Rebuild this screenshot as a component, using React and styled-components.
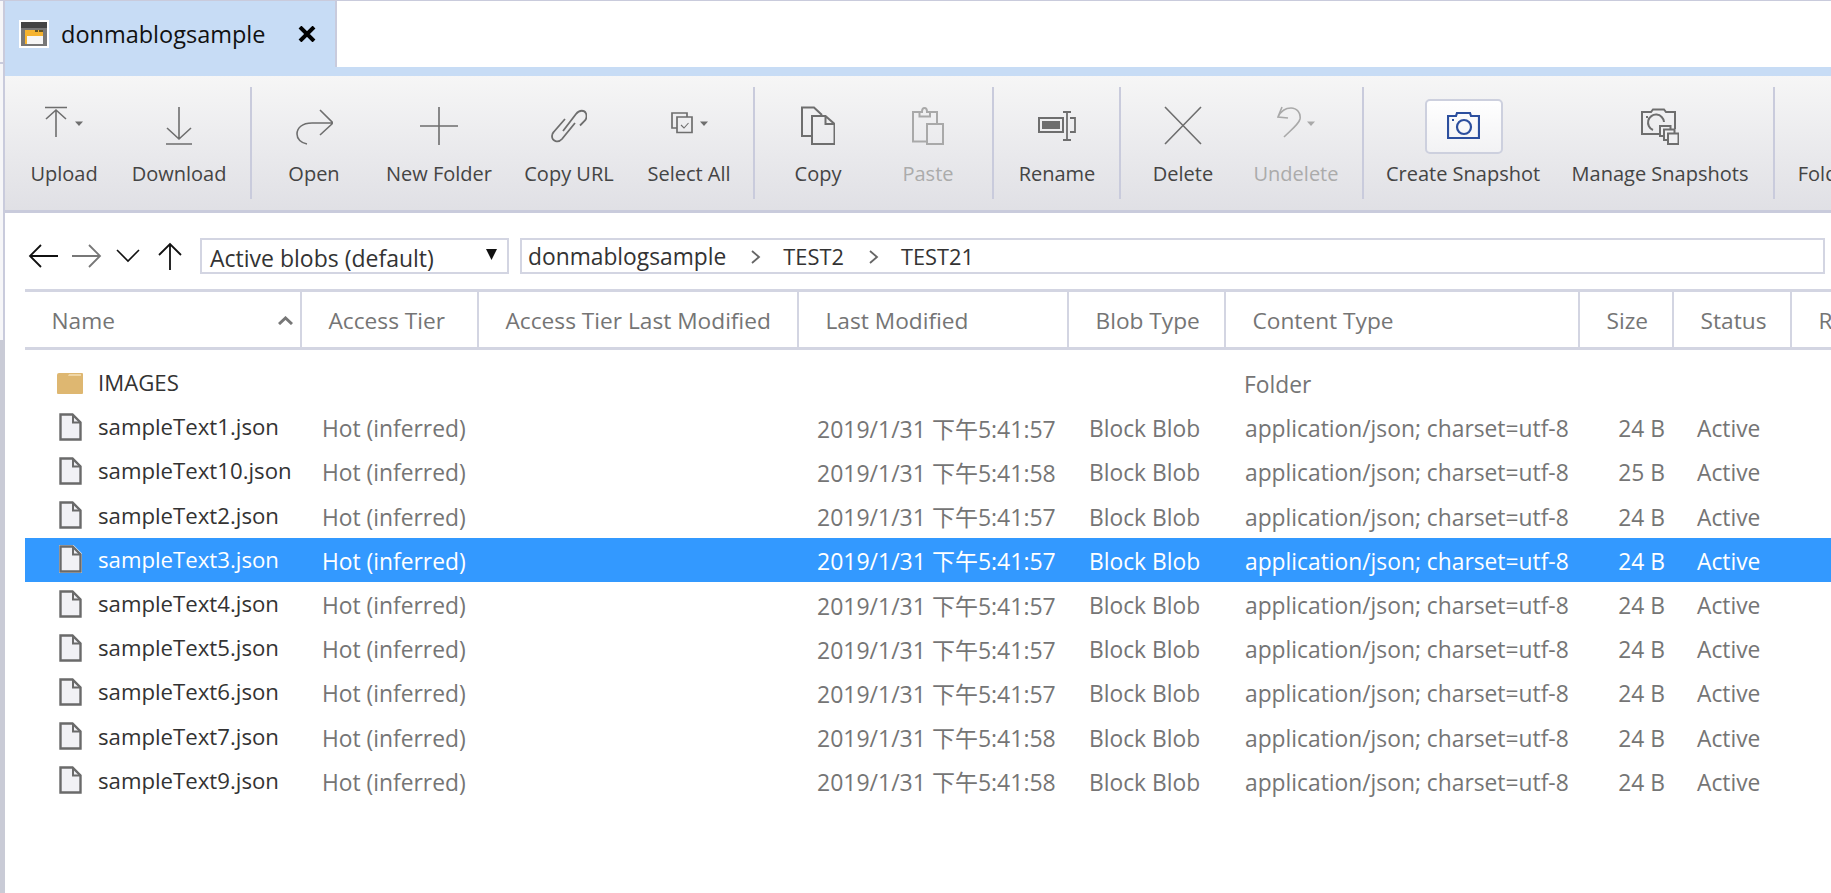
import React from 'react'
import styled, { createGlobalStyle } from 'styled-components'

const GlobalStyle = createGlobalStyle`
  html, body { margin: 0; padding: 0; background: #fff; }
  * { box-sizing: border-box; }
`

const COLUMNS = '277px 177px 320px 270px 157px 354px 94px 118px 1fr'

const files = [
  ['sampleText1.json', '2019/1/31 下午5:41:57', '24 B'],
  ['sampleText10.json', '2019/1/31 下午5:41:58', '25 B'],
  ['sampleText2.json', '2019/1/31 下午5:41:57', '24 B'],
  ['sampleText3.json', '2019/1/31 下午5:41:57', '24 B', true],
  ['sampleText4.json', '2019/1/31 下午5:41:57', '24 B'],
  ['sampleText5.json', '2019/1/31 下午5:41:57', '24 B'],
  ['sampleText6.json', '2019/1/31 下午5:41:57', '24 B'],
  ['sampleText7.json', '2019/1/31 下午5:41:58', '24 B'],
  ['sampleText9.json', '2019/1/31 下午5:41:58', '24 B'],
]

const Caret = () => <path d="M30 16.500h8l-4 4.500z" fill="currentColor" stroke="none" />

const Svg = ({ w, children }) => (
  <svg width={w} height="40" viewBox={`0 0 ${w} 40`} fill="none" stroke="currentColor" strokeWidth="1.6">
    {children}
  </svg>
)

const icons = {
  upload: <Svg w={38}><path d="M0 2.500h22M11 5v27M1 14l10-9 10 9" /><Caret /></Svg>,
  download: <Svg w={26}><path d="M13 2v32M1 23l12 11 12-11M0 39h26" /></Svg>,
  open: <Svg w={37}><path d="M24 5l13 13-13 12M36 18H16C6 18 1 23 1 29c0 5 4 9 10 10" /></Svg>,
  plus: <Svg w={38}><path d="M0 21h38M19 2v38" /></Svg>,
  link: (
    <Svg w={36}>
      <path d="M24 18L11 34c-4 4.500-10 2-10-3 0-2 .7-3 1.700-4L14 14" strokeWidth="1.8" />
      <path d="M12 26L25 9c3.500-4.500 8.500-4 10-.5 1.200 3 .5 5-1 7l-5 5" strokeWidth="1.8" />
    </Svg>
  ),
  selectAll: (
    <Svg w={38}>
      <path d="M7 23H2V8h15v4" strokeWidth="1.7" />
      <path d="M7 12h15v15.500H7z" strokeWidth="1.7" />
      <path d="M11 20l3 3 4.500-5" strokeWidth="1.1" />
      <Caret />
    </Svg>
  ),
  copy: (
    <Svg w={34}>
      <g strokeWidth="2">
        <path d="M10.700 31H1V2.500h12L21 10" />
        <path d="M11 11v28h22.500V19l-9-8zM24.500 11v8h9" />
      </g>
    </Svg>
  ),
  paste: (
    <Svg w={32}>
      <g strokeWidth="2">
        <path d="M15 36.500H1V7h6.500M18 7h7v12" />
        <path d="M7.500 7v4.500H18V7h-3c0-3-1.500-4-2.500-4-1.500 0-2.500 1-2.500 4z" />
        <path d="M15 19h16v20H15z" />
      </g>
    </Svg>
  ),
  rename: (
    <Svg w={38}>
      <path d="M1 13h24v14H1z" strokeWidth="2" />
      <path d="M4 16h18v8H4z" fill="currentColor" stroke="none" />
      <path d="M25 7h8M29 8v26M25 35h8M32 13h5v14h-5" strokeWidth="1.8" />
    </Svg>
  ),
  del: <Svg w={38}><path d="M1 2l36 37M37 2L1 39" /></Svg>,
  undelete: (
    <Svg w={38}>
      <path d="M5 2L1 12l10 1M1 12c3-6 8-9 13-9 6 0 10 5 9 11-1 5-9 11-16 18" />
      <Caret />
    </Svg>
  ),
  camera: (
    <Svg w={33}>
      <g strokeWidth="2.2">
        <path d="M1 11h8l1-3h13l1 3h8v22H1z" />
        <circle cx="17" cy="22" r="7" />
      </g>
      <path d="M5 14h2v2H5z" fill="currentColor" stroke="none" />
    </Svg>
  ),
  manage: (
    <Svg w={38}>
      <g strokeWidth="2">
        <path d="M18 29H1V7h9l2-2.500h11L25 7h9v17" />
        <path d="M12 25a8 8 0 1 1 11-8" />
        <path d="M19 21h10.500v10H19z" fill="#efeff1" />
        <path d="M23 24.500h10.500V35H23z" fill="#efeff1" />
        <path d="M27 28.500h10.500V39H27z" fill="#efeff1" />
      </g>
      <path d="M5 11h2v2H5z" fill="currentColor" stroke="none" />
    </Svg>
  ),
}

const tools = [
  { label: 'Upload', icon: 'upload', w: 118 },
  { label: 'Download', icon: 'download', w: 112 },
  { sep: 15 },
  { label: 'Open', icon: 'open', w: 122 },
  { label: 'New Folder', icon: 'plus', w: 128 },
  { label: 'Copy URL', icon: 'link', w: 132 },
  { label: 'Select All', icon: 'selectAll', w: 108 },
  { sep: 10 },
  { label: 'Copy', icon: 'copy', w: 124 },
  { label: 'Paste', icon: 'paste', w: 96, off: true },
  { sep: 16 },
  { label: 'Rename', icon: 'rename', w: 124 },
  { sep: 0 },
  { label: 'Delete', icon: 'del', w: 122 },
  { label: 'Undelete', icon: 'undelete', w: 104, off: true },
  { sep: 14 },
  { label: 'Create Snapshot', icon: 'camera', w: 196, active: true },
  { label: 'Manage Snapshots', icon: 'manage', w: 198 },
  { sep: 14 },
  { label: 'Folder Statistics', w: 190 },
]

function FileIcon({ selected }) {
  return (
    <svg width="25" height="30" viewBox="0 0 25 30">
      {selected && <path d="M1 1h14.500L24 9.500V29H1z" fill="#f4f8fd" />}
      <path d="M2.500 2.500h12l8 8v17h-20z" fill="#f1f1f5" stroke="#6a6a6a" strokeWidth="2.400" />
      <path d="M15 2.500v8h8" fill="none" stroke="#6a6a6a" strokeWidth="2" />
    </svg>
  )
}

function FolderIcon() {
  return (
    <svg width="28" height="24" viewBox="0 0 28 24">
      <path d="M1 4a2 2 0 0 1 2-2h23a1 1 0 0 1 1 1v19a1 1 0 0 1-1 1H2a1 1 0 0 1-1-1z" fill="#deb771" />
      <path d="M13 3h12v2H12z" fill="#efd6a6" />
    </svg>
  )
}

function Chevron() {
  return (
    <CrumbChevron width="10" height="14" viewBox="0 0 10 14" fill="none" stroke="#666" strokeWidth="1.8">
      <path d="M1 1l7 6-7 6" />
    </CrumbChevron>
  )
}

export default function App() {
  return (
    <Page>
      <GlobalStyle />
      <LeftStrip>
        <StripTop />
        <StripMid />
        <StripBottom />
      </LeftStrip>
      <Main>
        <TabBar>
          <Tab>
            <svg viewBox="0 0 30 28" width="30" height="28">
              <rect width="30" height="28" fill="#fff" />
              <rect x="2" y="2" width="26" height="24" fill="#777" />
              <rect x="2" y="2" width="26" height="6" fill="#444" />
              <rect x="6" y="10" width="18" height="14" fill="#f5b32f" />
              <rect x="8" y="16" width="16" height="8" fill="#f6f6f6" />
              <path d="M16 10h3v2h-3zM20 10h4v2h-4z" fill="#665522" />
            </svg>
            <TabTitle>donmablogsample</TabTitle>
            <svg width="18" height="16" viewBox="0 0 18 16">
              <path d="M2 1l14 14M16 1L2 15" stroke="#000" strokeWidth="4" />
            </svg>
          </Tab>
        </TabBar>
        <BlueStrip />
        <Toolbar>
          {tools.map((t, i) =>
            t.sep !== undefined ? (
              <ToolSep key={i} $gap={t.sep} />
            ) : (
              <ToolButton key={i} $w={t.w}>
                {t.active && <ActiveBox />}
                <IconSlot $off={t.off} $active={t.active}>{t.icon && icons[t.icon]}</IconSlot>
                <ToolLabel $off={t.off}>{t.label}</ToolLabel>
              </ToolButton>
            )
          )}
        </Toolbar>
        <NavRow>
          <NavIcons>
            <svg width="30" height="24" viewBox="0 0 30 24" fill="none" stroke="#111" strokeWidth="1.8">
              <path d="M30 12H2M13 1L2 12l11 11" />
            </svg>
            <svg width="30" height="24" viewBox="0 0 30 24" fill="none" stroke="#777" strokeWidth="1.8">
              <path d="M0 12h28M17 1l11 11-11 11" />
            </svg>
            <svg width="24" height="14" viewBox="0 0 24 14" fill="none" stroke="#111" strokeWidth="1.6">
              <path d="M1 1l11 11L23 1" />
            </svg>
            <svg width="24" height="28" viewBox="0 0 24 28" fill="none" stroke="#111" strokeWidth="1.8">
              <path d="M12 28V2M1 13L12 2l11 11" />
            </svg>
          </NavIcons>
          <ViewSelect>
            <span>Active blobs (default)</span>
            <svg width="11" height="11" viewBox="0 0 11 11"><path d="M0 0h11L5.500 11z" fill="#111" /></svg>
          </ViewSelect>
          <Breadcrumb>
            <span>donmablogsample</span>
            <Chevron />
            <CrumbFolder>TEST2</CrumbFolder>
            <Chevron />
            <CrumbFolder>TEST21</CrumbFolder>
          </Breadcrumb>
        </NavRow>
        <Header>
          <HeaderCell>
            Name
            <svg width="15" height="9" viewBox="0 0 15 9" fill="none" stroke="#777" strokeWidth="3">
              <path d="M1 8l6.500-6L14 8" />
            </svg>
          </HeaderCell>
          <HeaderCell>Access Tier</HeaderCell>
          <HeaderCell>Access Tier Last Modified</HeaderCell>
          <HeaderCell>Last Modified</HeaderCell>
          <HeaderCell>Blob Type</HeaderCell>
          <HeaderCell>Content Type</HeaderCell>
          <HeaderCell>Size</HeaderCell>
          <HeaderCell>Status</HeaderCell>
          <HeaderCell>Remaining Days</HeaderCell>
        </Header>
        <Rows>
          <Row>
            <NameCell>
              <IconBox><FolderIcon /></IconBox>
              <FileName>IMAGES</FileName>
            </NameCell>
            <Cell />
            <Cell />
            <Cell />
            <Cell />
            <Cell $pad={18}>Folder</Cell>
          </Row>
          {files.map(([name, date, size, selected]) => (
            <Row key={name} $selected={selected}>
              <NameCell>
                <IconBox><FileIcon selected={selected} /></IconBox>
                <FileName $selected={selected}>{name}</FileName>
              </NameCell>
              <Cell>Hot (inferred)</Cell>
              <Cell />
              <DateCell $pad={18}>{date}</DateCell>
              <Cell $pad={20}>Block Blob</Cell>
              <Cell $pad={19}>application/json; charset=utf-8</Cell>
              <SizeCell>{size}</SizeCell>
              <Cell $pad={23}>Active</Cell>
            </Row>
          ))}
        </Rows>
      </Main>
    </Page>
  )
}

// --------------------------------
// STYLES
// --------------------------------

const Page = styled.div`
  display: flex;
  width: 100%;
  height: 100vh;
  overflow: hidden;
  background: #fff;
  font-family: "Open Sans", "Noto Sans CJK TC", sans-serif;
`

const LeftStrip = styled.div`
  width: 5px;
  flex-shrink: 0;
  display: flex;
  flex-direction: column;
`

const StripTop = styled.div`
  height: 64px;
  background: #f6f6f8;
  border-right: 2px solid #c9cbdc;
  border-top: 1px solid #c9cbdc;
  border-bottom: 2px solid #c9cbdc;
`

const StripMid = styled.div`
  height: 276px;
  background: #f6f6f8;
  border-right: 2px solid #c9cbdc;
`

const StripBottom = styled.div`
  flex: 1;
  background: #c9cbd6;
`

const Main = styled.div`
  flex: 1;
  min-width: 0;
`

const TabBar = styled.div`
  height: 67px;
  border-top: 1px solid #c9cbdc;
  background: #fff;
`

const Tab = styled.div`
  width: 332px;
  height: 66px;
  display: flex;
  align-items: center;
  padding: 0 19px 0 14px;
  background: #c7dcf5;
  border-right: 2px solid #c9cbdc;
`

const TabTitle = styled.span`
  flex: 1;
  margin-left: 12px;
  font-size: 23.5px;
  color: #111;
`

const BlueStrip = styled.div`
  height: 9px;
  background: #c7dcf5;
`

const Toolbar = styled.div`
  height: 137px;
  display: flex;
  align-items: stretch;
  padding: 11px 0;
  background: linear-gradient(#f6f6f6, #e0e0e5);
  border-bottom: 3px solid #c9cbdc;
`

const ToolSep = styled.div`
  width: 2px;
  flex-shrink: 0;
  margin: 0 1px 0 ${(p) => p.$gap}px;
  background: #c9cbdc;
`

const ToolButton = styled.div`
  position: relative;
  width: ${(p) => p.$w}px;
  flex-shrink: 0;
  display: flex;
  flex-direction: column;
  align-items: center;
`

const ActiveBox = styled.div`
  position: absolute;
  top: 12px;
  left: 60px;
  width: 78px;
  height: 55px;
  border: 2px solid #cdd0de;
  border-radius: 5px;
  background: linear-gradient(#fff, #f2f2f4);
`

const IconSlot = styled.div`
  position: relative;
  height: 40px;
  margin-top: 18px;
  display: flex;
  color: ${(p) => (p.$active ? '#2c4f9e' : p.$off ? '#a9a9a9' : '#6e6e6e')};
`

const ToolLabel = styled.div`
  margin-top: 15px;
  font-size: 20px;
  line-height: 28px;
  white-space: nowrap;
  color: ${(p) => (p.$off ? '#ababab' : '#444')};
`

const NavRow = styled.div`
  display: flex;
  align-items: stretch;
  height: 36px;
  margin: 25px 6px 15px 0;
`

const NavIcons = styled.div`
  display: flex;
  align-items: center;
  gap: 14px;
  width: 195px;
  padding-left: 23px;

  svg:last-child { margin-left: 4px; }
`

const ViewSelect = styled.div`
  width: 309px;
  display: flex;
  align-items: center;
  justify-content: space-between;
  padding: 3px 10px 0 8px;
  border: 2px solid #d3d5e2;
  font-size: 23px;
  color: #333;

  svg { margin-top: -6px; }
`

const Breadcrumb = styled.div`
  flex: 1;
  margin-left: 11px;
  display: flex;
  align-items: center;
  gap: 22px;
  padding: 1px 6px 0;
  border: 2px solid #d3d5e2;
  font-size: 22.8px;
  color: #333;
`

const CrumbChevron = styled.svg`
  margin-left: 3px;
`

const CrumbFolder = styled.span`
  font-size: 21.8px;
`

const Header = styled.div`
  display: grid;
  grid-template-columns: ${COLUMNS};
  height: 61px;
  margin-left: 20px;
  border-top: 3px solid #d3d5e2;
  border-bottom: 3px solid #d3d5e2;
`

const HeaderCell = styled.div`
  display: flex;
  align-items: center;
  justify-content: space-between;
  padding: 2px 7px 0 26.5px;
  border-right: 2px solid #d3d5e2;
  font-size: 22.7px;
  color: #757575;
  white-space: nowrap;
  overflow: hidden;

  &:last-child { border-right: none; }
`

const Rows = styled.div`
  margin-top: 11px;
  margin-left: 20px;
`

const Row = styled.div`
  display: grid;
  grid-template-columns: ${COLUMNS};
  height: 44.2px;
  align-items: center;
  font-size: 22.8px;
  background: ${(p) => (p.$selected ? '#3399ff' : 'transparent')};
  color: ${(p) => (p.$selected ? '#fff' : '#757575')};
`

const Cell = styled.div`
  padding: 3px 0 0 ${(p) => p.$pad || 20}px;
  white-space: nowrap;
`

const DateCell = styled(Cell)`
  font-size: 23px;
  padding-top: 1px;
`

const NameCell = styled.div`
  display: flex;
  align-items: center;
  gap: 14px;
  padding: 0 0 1px 31px;
`

const IconBox = styled.div`
  width: 28px;
  display: flex;
  justify-content: center;
`

const FileName = styled.span`
  font-size: 22.2px;
  color: ${(p) => (p.$selected ? '#fff' : '#333')};
`

const SizeCell = styled.div`
  padding: 3px 9px 0 0;
  text-align: right;
`
